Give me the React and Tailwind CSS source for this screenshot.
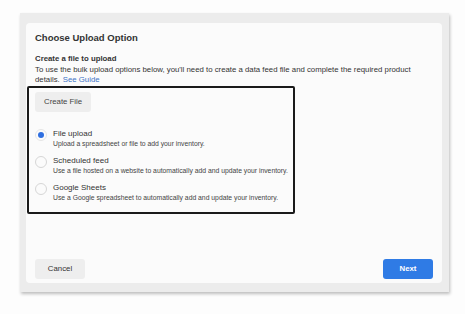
import React, { useState } from "react";

const options = [
  {
    id: "upload",
    title: "File upload",
    desc: "Upload a spreadsheet or file to add your inventory.",
  },
  {
    id: "scheduled",
    title: "Scheduled feed",
    desc: "Use a file hosted on a website to automatically add and update your inventory.",
  },
  {
    id: "sheets",
    title: "Google Sheets",
    desc: "Use a Google spreadsheet to automatically add and update your inventory.",
  },
];

const App = () => {
  const [selected, setSelected] = useState("upload");

  return (
    <div
      className="w-[465px] h-[314px] bg-[#fdfdfd] pt-[13px] pl-[20px] text-[#1c1e21]"
      style={{ fontFamily: '"Liberation Sans", Arial, sans-serif' }}
    >
      <div className="w-[429px] h-[279px] bg-[#ececec] pt-[10px] pl-[6px] shadow-[1px_2px_3px_rgba(0,0,0,0.25)]">
        <div className="w-[416px] h-[260px] bg-[#fbfbfb] rounded-[4px] flex flex-col pl-[9px] pr-[9px]">
          <h2 className="text-[9.5px] font-bold text-[#333] mt-[9px] leading-[11px]">
            Choose Upload Option
          </h2>
          <div className="mt-[11px] text-[7.8px] leading-[10.5px] text-[#333]">
            <div className="font-bold">Create a file to upload</div>
            <div className="whitespace-nowrap">
              To use the bulk upload options below, you'll need to create a data
              feed file and complete the required product
            </div>
            <div className="flex gap-[3px]">
              <span>details.</span>
              <span className="text-[#3b73c6]">See Guide</span>
            </div>
          </div>

          {/* highlighted box */}
          <div className="-ml-[8px] w-[268px] h-[128px] border-2 border-[#1a1a1a] rounded-[2px] pl-[6px] pt-[4px]">
            <button className="block h-[20px] px-[9px] bg-[#eeeeee] rounded-[3px] text-[7.8px] leading-[20px] text-[#444]">
              Create File
            </button>
            <div className="mt-[16px] flex flex-col gap-[7px]">
              {options.map((opt) => (
                <div
                  key={opt.id}
                  className="flex items-start gap-[6px] cursor-pointer"
                  onClick={() => setSelected(opt.id)}
                >
                  <div
                    className={`mt-[1px] w-[12px] h-[12px] rounded-full border flex items-center justify-center shrink-0 ${
                      selected === opt.id ? "border-[#e6e6e6]" : "border-[#d6d6d6]"
                    }`}
                  >
                    {selected === opt.id && (
                      <div className="w-[6px] h-[6px] rounded-full bg-[#2f6fe0]"></div>
                    )}
                  </div>
                  <div>
                    <div className="text-[8px] leading-[11px] text-[#333]">
                      {opt.title}
                    </div>
                    <div className="text-[6.8px] leading-[9px] text-[#444] whitespace-nowrap">
                      {opt.desc}
                    </div>
                  </div>
                </div>
              ))}
            </div>
          </div>

          <div className="mt-auto mb-[4px] flex justify-between">
            <button className="w-[50px] h-[20px] bg-[#eeeeee] rounded-[3px] text-[7.8px] text-[#333]">
              Cancel
            </button>
            <button className="w-[50px] h-[20px] bg-[#2f7be5] rounded-[3px] text-[7.8px] font-bold text-white">
              Next
            </button>
          </div>
        </div>
      </div>
    </div>
  );
};

export default App;
